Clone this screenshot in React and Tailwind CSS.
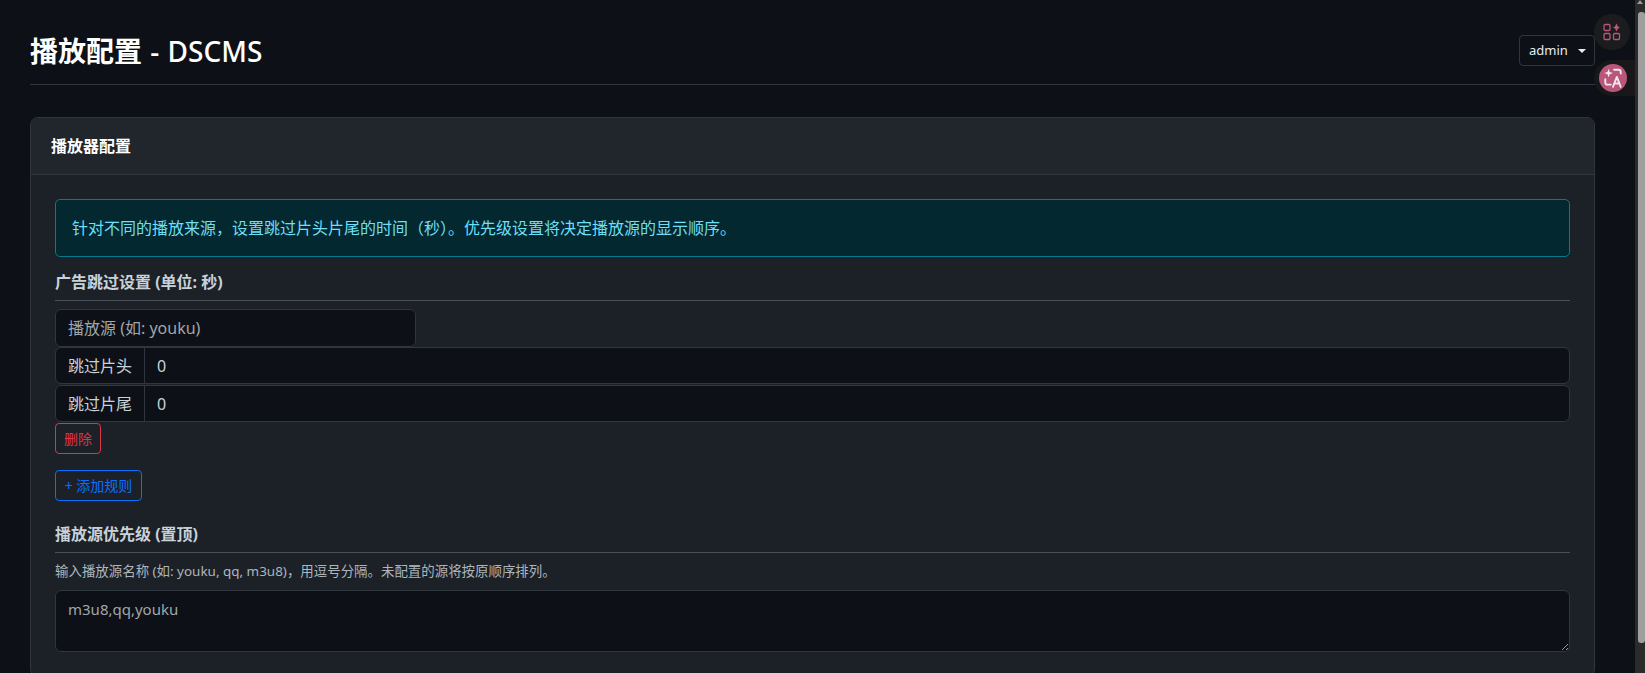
export default function App() {
  return (
    <div className="flex h-[673px] w-full overflow-hidden bg-[#0d1117] text-[#c9d1d9] font-['Noto_Sans','Noto_Sans_CJK_SC',sans-serif] text-[16px]">
      <div className="relative flex-1 min-w-0 pt-[30px] pl-[30px] pr-[40px]">
        <div className="flex items-start justify-between h-[55px] border-b border-[#30363d]">
          <h1 className="text-[28px] font-medium leading-[34px] text-white mt-[4px] whitespace-pre [word-spacing:1px]">
            <span className="font-bold">播放配置</span> - DSCMS
          </h1>
          <button className="flex items-center h-[31px] w-[76px] pl-[9px] mt-[5px] rounded-[4px] border border-[#30363d] text-[13px] text-[#e6edf3]">
            admin
            <span className="ml-[10px] w-0 h-0 border-x-[4px] border-x-transparent border-t-[4px] border-t-[#e6edf3]" />
          </button>
        </div>

        <div className="mt-[32px] rounded-[8px] border border-[#30363d] bg-[#1c2128]">
          <div className="h-[57px] flex items-center px-[20px] bg-[#21262d] rounded-t-[8px] border-b border-[#30363d] font-bold text-[16px] text-white">
            播放器配置
          </div>
          <div className="pt-[24px] px-[24px] pb-[24px]">
            <div className="h-[58px] flex items-center px-[16px] rounded-[5px] border border-[#087990] bg-[#032830] text-[#6edff6] text-[16px]">
              针对不同的播放来源，设置跳过片头片尾的时间（秒）。优先级设置将决定播放源的显示顺序。
            </div>

            <div className="mt-[13px] h-[31px] border-b border-[#495057] font-bold text-[16px] leading-[24px] text-[#c9d1d9]">
              广告跳过设置 (单位: 秒)
            </div>
            <input
              readOnly
              placeholder="播放源 (如: youku)"
              className="block mt-[8px] h-[38px] w-[361px] px-[12px] rounded-[6px] border border-[#30363d] bg-[#0d1117] text-[16px] outline-none placeholder:text-[#a0a6ac]"
            />
            {["跳过片头", "跳过片尾"].map((label) => (
              <div key={label} className="flex h-[37px] rounded-[6px] border border-[#30363d] bg-[#0d1117] mb-[1px]">
                <span className="flex items-center px-[12px] w-[89px] border-r border-[#30363d] text-[16px] text-[#c9d1d9]">{label}</span>
                <span className="flex items-center px-[12px] text-[16px] text-[#c9d1d9]">0</span>
              </div>
            ))}
            <button className="flex items-center justify-center h-[31px] w-[46px] rounded-[4px] border border-[#dc3545] text-[#dc3545] text-[14px]">删除</button>
            <button className="mt-[16px] flex items-center justify-center h-[31px] w-[87px] rounded-[4px] border border-[#0d6efd] text-[#0d6efd] text-[14px]">
              <span>+ 添加规则</span>
            </button>

            <div className="mt-[21px] h-[31px] border-b border-[#495057] font-bold text-[16px] leading-[24px] text-[#c9d1d9]">
              播放源优先级 (置顶)
            </div>
            <p className="mt-[9px] text-[13.45px] leading-[18px] text-[#adb5bd]">
              输入播放源名称 (如: youku, qq, m3u8)，用逗号分隔。未配置的源将按原顺序排列。
            </p>
            <textarea
              readOnly
              defaultValue="m3u8,qq,youku"
              className="block mt-[10px] h-[62px] w-full px-[12px] py-[6px] rounded-[6px] border border-[#30363d] bg-[#0d1117] text-[15px] leading-[24px] text-[#a0a6ac] outline-none resize-y"
            />
          </div>
        </div>

        <div className="absolute top-[14px] right-[5px] w-[36px] h-[36px] rounded-full bg-[#1c1c1f] flex items-center justify-center">
          <svg width="18" height="18" viewBox="0 0 18 18" fill="none" stroke="#b8577a" strokeWidth="1.3">
            <rect x="1" y="1.5" width="6" height="6" rx="1.2" />
            <rect x="1" y="10.5" width="6" height="6" rx="1.2" />
            <rect x="10.5" y="10.5" width="6" height="6" rx="1.2" />
            <path d="M13.5 0.5 L15 3.5 L17 4.5 L15 5.5 L13.5 8.5 L12 5.5 L10 4.5 L12 3.5 Z" fill="#b8577a" stroke="none" />
          </svg>
        </div>
        <div className="absolute top-[60px] right-0 w-[41px] h-[36px] rounded-l-[18px] bg-[#18181b] flex items-center pl-[5px]">
          <div className="w-[28px] h-[28px] rounded-full bg-[#b8577a] flex items-center justify-center">
            <svg width="22" height="22" viewBox="0 0 20 20" fill="none" stroke="#f4e6ec" strokeWidth="1.7" strokeLinecap="round" strokeLinejoin="round">
              <path d="M6 1.5 L7 4.5 L10 5.5 L7 6.5 L6 9.5 L5 6.5 L2 5.5 L5 4.5 Z" fill="#f4e6ec" stroke="none" />
              <path d="M11 2.5 H15 a2 2 0 0 1 2 2 V6" />
              <path d="M3 11 V14 a2 2 0 0 0 2 2 H8" />
              <path d="M10 18 L13.5 9 L17 18 M11.2 15 H15.8" />
            </svg>
          </div>
        </div>
      </div>

      <div className="relative w-[10px] shrink-0 bg-[#2b2b2b]">
        <div className="absolute top-0 left-[2px] w-0 h-0 border-x-[3px] border-x-transparent border-b-[4px] border-b-[#9a9a9a]" />
        <div className="absolute top-[12px] left-[3px] right-0 h-[631px] rounded-[3px] bg-[#9f9f9f]" />
      </div>
    </div>
  );
}
